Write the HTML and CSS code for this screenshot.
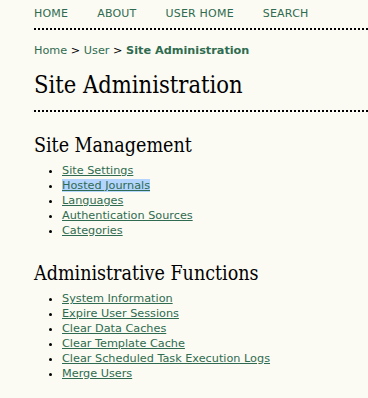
FILE: index.html
```html
<!DOCTYPE html>
<html lang="en">
<head>
  <meta charset="UTF-8" />
  <title>Site Administration</title>
  <link rel="stylesheet" href="styles.css">
</head>
<body>
  <div class="page">
    <ul class="navbar">
      <li><a href="#">Home</a></li>
      <li><a href="#">About</a></li>
      <li><a href="#">User Home</a></li>
      <li><a href="#">Search</a></li>
    </ul>

    <div class="breadcrumb">
      <a href="#">Home</a> &gt;
      <a href="#">User</a> &gt;
      <a href="#" class="current">Site Administration</a>
    </div>

    <h2 class="page-title">Site Administration</h2>

    <div class="content">
      <h3>Site Management</h3>
      <ul class="plain">
        <li><a href="#">Site Settings</a></li>
        <li><a href="#" class="selected">Hosted Journals</a></li>
        <li><a href="#">Languages</a></li>
        <li><a href="#">Authentication Sources</a></li>
        <li><a href="#">Categories</a></li>
      </ul>

      <h3>Administrative Functions</h3>
      <ul class="plain">
        <li><a href="#">System Information</a></li>
        <li><a href="#">Expire User Sessions</a></li>
        <li><a href="#">Clear Data Caches</a></li>
        <li><a href="#">Clear Template Cache</a></li>
        <li><a href="#">Clear Scheduled Task Execution Logs</a></li>
        <li><a href="#">Merge Users</a></li>
      </ul>
    </div>
  </div>
</body>
</html>
```

FILE: styles.css
```css
body {
  margin: 0;
  background: #fbfbf3;
  color: #000;
  font-family: "DejaVu Sans", Verdana, sans-serif;
  font-size: 11.25px;
}

a {
  color: #2f6b50;
}

.page {
  padding-left: 34px;
}

.navbar {
  list-style: none;
  margin: 0;
  padding: 7px 0 0;
  height: 21px;
  display: flex;
  border-bottom: 2px dotted #000;
}

.navbar li {
  margin-right: 29px;
}

.navbar a {
  text-decoration: none;
  text-transform: uppercase;
  font-size: 11px;
  letter-spacing: 0.2px;
}

.breadcrumb {
  margin-top: 14px;
  color: #000;
}

.breadcrumb a {
  text-decoration: none;
}

.breadcrumb .current {
  font-weight: bold;
}

.page-title {
  font-family: "DejaVu Serif Condensed", "DejaVu Serif", Georgia, serif;
  font-stretch: condensed;
  font-weight: normal;
  font-size: 23.5px;
  margin: 14px 0 0;
  padding-bottom: 11px;
  border-bottom: 2px dotted #000;
}

.content h3 {
  font-family: "DejaVu Serif Condensed", "DejaVu Serif", Georgia, serif;
  font-stretch: condensed;
  font-weight: normal;
  font-size: 19.5px;
  margin: 22px 0 6px;
}

.plain {
  margin: 0 0 24px;
  padding-left: 28px;
  line-height: 15px;
}

.selected {
  background: #b4d5fe;
}
```
